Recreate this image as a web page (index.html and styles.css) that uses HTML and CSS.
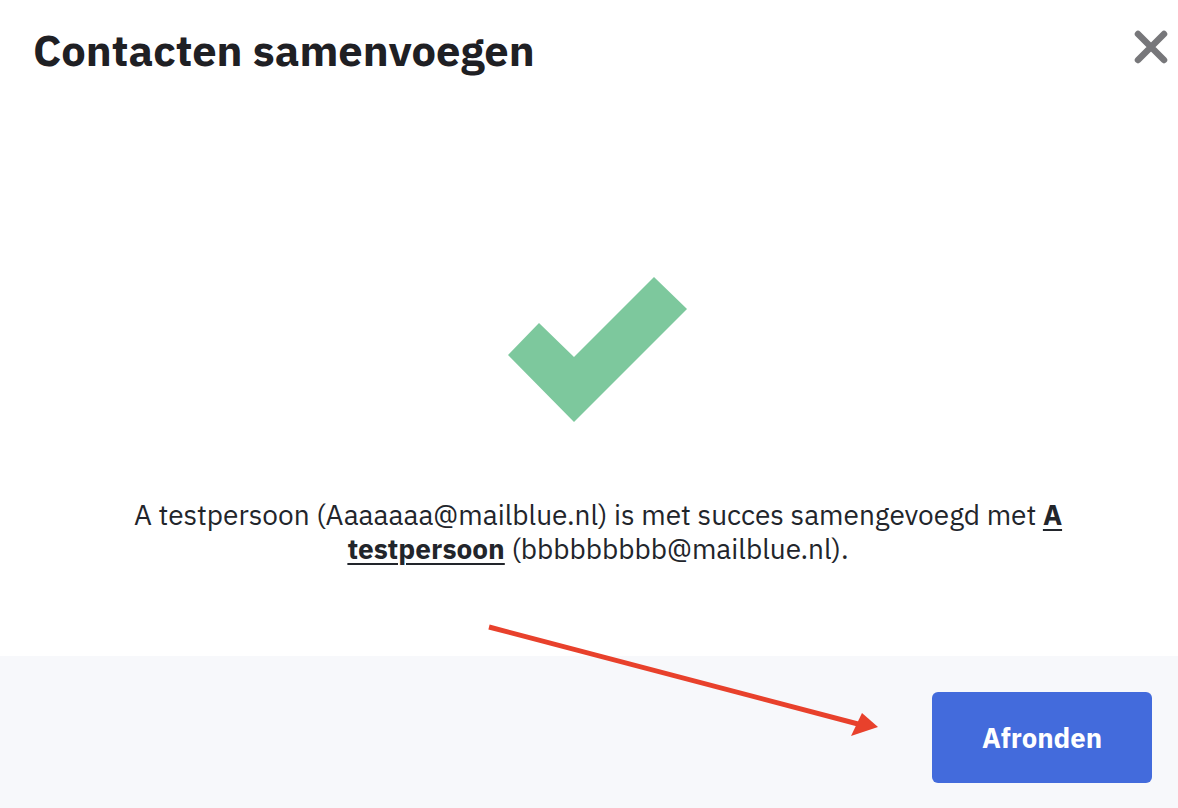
FILE: index.html
```html
<!DOCTYPE html>
<html lang="nl">
<head>
<meta charset="utf-8">
<title>Contacten samenvoegen</title>
<link rel="stylesheet" href="styles.css">
</head>
<body>
<div class="modal">
  <header class="modal-header">
    <h1 class="modal-title">Contacten samenvoegen</h1>
    <button class="close-btn" aria-label="Sluiten">
      <svg width="34" height="34" viewBox="0 0 34 34"><path d="M4 4 L30 30 M30 4 L4 30" stroke="#77777a" stroke-width="6.5" stroke-linecap="round" fill="none"/></svg>
    </button>
  </header>
  <main class="modal-body">
    <svg class="check" width="180" height="146" viewBox="0 0 180 146"><polygon points="31,46 0,78 66,145 179,32 146,0 66,80" fill="#7dc89d"/></svg>
    <p class="message">A testpersoon (Aaaaaaa@mailblue.nl) is met succes samengevoegd met <a href="#" class="contact-link">A<br>testpersoon</a> (bbbbbbbbb@mailblue.nl).</p>
  </main>
  <footer class="modal-footer">
    <button class="primary-btn">Afronden</button>
  </footer>
  <svg class="annotation" width="1178" height="808" viewBox="0 0 1178 808"><line x1="489" y1="627" x2="858" y2="724" stroke="#e8412c" stroke-width="5"/><polygon points="878,727 851,736 862,713" fill="#e8412c"/></svg>
</div>
</body>
</html>
```
FILE: styles.css
```css
* { box-sizing: border-box; }
html, body { margin: 0; padding: 0; background: #fff; }
body { font-family: "IBM Plex Sans", "Inter", "Noto Sans", sans-serif; color: #22252b; }
.modal { position: relative; width: 1178px; height: 808px; display: flex; flex-direction: column; overflow: hidden; }
.modal-header { height: 100px; display: flex; align-items: flex-start; justify-content: space-between; padding: 24px 10px 0 33px; }
.modal-title { margin: 0; font-size: 43.5px; font-weight: 700; color: #1f2024; line-height: 52px; }
.close-btn { border: 0; background: none; padding: 0; margin-top: 6px; cursor: pointer; width: 34px; height: 34px; }
.close-btn svg { display: block; }
.modal-body { flex: 1; display: flex; flex-direction: column; align-items: center; padding: 177px 0 0 18px; }
.check { display: block; }
.message { margin: 75px 0 0; font-size: 28px; line-height: 34px; text-align: center; color: #22252b; }
.contact-link { color: #22252b; font-weight: 700; text-decoration: underline; text-underline-offset: 4px; text-decoration-thickness: 2px; }
.modal-footer { height: 152px; background: #f7f8fb; display: flex; align-items: flex-start; justify-content: flex-end; padding: 36px 26px 0 0; }
.primary-btn { width: 220px; height: 91px; border: 0; border-radius: 6px; background: #436bdc; color: #fff; font-family: inherit; font-size: 27.5px; font-weight: 700; cursor: pointer; }
.annotation { position: absolute; left: 0; top: 0; pointer-events: none; }
```
